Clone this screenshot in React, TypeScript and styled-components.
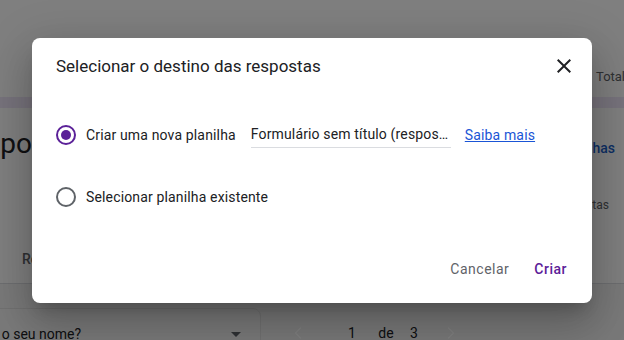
import React from "react";
import styled, { createGlobalStyle } from "styled-components";
import { ChevronLeft, ChevronRight } from "lucide-react";

const GlobalStyle = createGlobalStyle`
  html, body { margin: 0; padding: 0; }
  body {
    font-family: Roboto, "Noto Sans", Arial, sans-serif;
    background: #ffffff;
    -webkit-font-smoothing: antialiased;
  }
  * { box-sizing: border-box; }
`;

const Page = styled.div`
  position: relative;
  width: 624px;
  height: 340px;
  overflow: hidden;
  background: #ffffff;
  color: #202124;
`;

/* ---------- page behind the dialog ---------- */

const TopBar = styled.header`
  height: 97px;
  display: grid;
  grid-template-columns: 596px 1fr;
  align-items: end;
  padding-bottom: 10px;
`;

const TotalLabel = styled.span`
  grid-column: 2;
  font-size: 13px;
  line-height: 20px;
  color: #5f6368;
  white-space: nowrap;
`;

const ThemeBand = styled.div`
  height: 11px;
  background: #eee6f8;
`;

const HeadingRow = styled.div`
  height: 72px;
  display: flex;
  align-items: baseline;
  justify-content: space-between;
  padding: 18px 9px 0 0;
`;

const BigHeading = styled.h1`
  margin: 0 0 0 -61px;
  font-size: 28px;
  line-height: 36px;
  font-weight: 400;
  color: #202124;
  white-space: nowrap;
`;

const SheetsLink = styled.a`
  font-size: 14px;
  font-weight: 500;
  color: #1a5fc8;
  text-decoration: none;
  white-space: nowrap;
`;

const StatusRow = styled.div`
  height: 50px;
  display: flex;
  align-items: center;
  justify-content: flex-end;
  padding-right: 15px;
`;

const StatusText = styled.span`
  font-size: 12px;
  color: #5f6368;
  white-space: nowrap;
`;

const TabsRow = styled.nav`
  height: 54px;
  display: flex;
  align-items: flex-end;
  gap: 40px;
  padding: 0 0 14px 22px;
  border-bottom: 1px solid #dadce0;
`;

const Tab = styled.span`
  font-size: 14px;
  line-height: 20px;
  font-weight: 500;
  color: #5f6368;
`;

const LowerArea = styled.section`
  display: flex;
  align-items: flex-start;
  padding-top: 24px;
  height: 57px;
  background: #f2f2f2;
`;

const QuestionSelect = styled.div`
  margin-left: -58px;
  width: 319px;
  height: 56px;
  flex: none;
  display: flex;
  align-items: flex-start;
  justify-content: space-between;
  padding: 15px 19px 0 16px;
  border: 1px solid #e2e2e2;
  border-radius: 8px;
  background: #f5f5f5;
`;

const QuestionText = styled.span`
  font-size: 14px;
  line-height: 20px;
  color: #202124;
  white-space: nowrap;
`;

const DropArrow = styled.span`
  margin-top: 8px;
  width: 0;
  height: 0;
  border-left: 5px solid transparent;
  border-right: 5px solid transparent;
  border-top: 5px solid #5f6368;
`;

const Pager = styled.div`
  display: flex;
  align-items: center;
  height: 36px;
  margin: 7px 0 0 17px;
  font-size: 14px;
  color: #202124;
`;

const PagerNav = styled.span<{ $ml?: number }>`
  width: 40px;
  height: 36px;
  margin-left: ${(p) => p.$ml ?? 0}px;
  display: flex;
  align-items: center;
  justify-content: center;
  color: #ffffff;
`;

const PagerItem = styled.span<{ $w: number; $ml: number }>`
  width: ${(p) => p.$w}px;
  margin-left: ${(p) => p.$ml}px;
  text-align: center;
  line-height: 20px;
`;

/* ---------- dialog ---------- */

const Scrim = styled.div`
  position: absolute;
  inset: 0;
  background: rgba(0, 0, 0, 0.5);
  display: flex;
  align-items: center;
  justify-content: center;
`;

const Dialog = styled.div`
  width: 560px;
  background: #ffffff;
  border-radius: 8px;
  box-shadow: 0 11px 15px -7px rgba(0, 0, 0, 0.2),
    0 24px 38px 3px rgba(0, 0, 0, 0.14), 0 9px 46px 8px rgba(0, 0, 0, 0.12);
`;

const DialogHeader = styled.div`
  display: flex;
  align-items: center;
  justify-content: space-between;
  padding: 16px 16px 0 24px;
`;

const DialogTitle = styled.h2`
  margin: 0;
  font-size: 17px;
  line-height: 24px;
  font-weight: 400;
  color: #202124;
`;

const CloseButton = styled.button`
  width: 24px;
  height: 24px;
  padding: 0;
  border: none;
  background: transparent;
  color: #202124;
  display: flex;
  align-items: center;
  justify-content: center;
  cursor: pointer;
`;

const DialogBody = styled.div`
  display: flex;
  flex-direction: column;
  gap: 30px;
  padding: 41px 24px 38px 24px;
`;

const OptionRow = styled.label`
  height: 32px;
  display: flex;
  align-items: center;
`;

const Radio = styled.span<{ $checked?: boolean }>`
  position: relative;
  flex: none;
  width: 20px;
  height: 20px;
  border-radius: 50%;
  border: 2px solid ${(p) => (p.$checked ? "#5b2198" : "#5f6368")};
  margin-right: 10px;

  &::after {
    content: "";
    position: absolute;
    left: 3px;
    top: 3px;
    width: 10px;
    height: 10px;
    border-radius: 50%;
    background: #5b2198;
    display: ${(p) => (p.$checked ? "block" : "none")};
  }
`;

const OptionLabel = styled.span`
  font-size: 14px;
  line-height: 20px;
  color: #202124;
  letter-spacing: 0.15px;
  white-space: nowrap;
`;

const NameField = styled.span`
  width: 200px;
  margin-left: 15px;
  padding: 2px 0 3px 0;
  font-size: 14px;
  line-height: 20px;
  color: #202124;
  letter-spacing: 0.15px;
  border-bottom: 1px solid #dadce0;
  white-space: nowrap;
  overflow: hidden;
  text-overflow: ellipsis;
`;

const LearnMore = styled.a`
  margin-left: 14px;
  font-size: 14px;
  line-height: 20px;
  color: #1a55d6;
  text-decoration: underline;
  letter-spacing: 0.15px;
  white-space: nowrap;
`;

const DialogFooter = styled.div`
  display: flex;
  justify-content: flex-end;
  gap: 9px;
  padding: 0 17px 16px 24px;
`;

const TextButton = styled.button<{ $tone: "neutral" | "primary" }>`
  height: 36px;
  padding: 0 8px;
  border: none;
  background: transparent;
  font-family: Roboto, "Noto Sans", Arial, sans-serif;
  font-size: 14px;
  font-weight: ${(p) => (p.$tone === "primary" ? 500 : 400)};
  letter-spacing: 0.5px;
  color: ${(p) => (p.$tone === "primary" ? "#5b2198" : "#5f6368")};
  cursor: pointer;
`;

export default function App() {
  return (
    <>
      <GlobalStyle />
      <Page>
        <TopBar>
          <TotalLabel>Total de pontos: 0</TotalLabel>
        </TopBar>
        <ThemeBand />
        <HeadingRow>
          <BigHeading>3 respostas</BigHeading>
          <SheetsLink href="#">Vincular ao Planilhas</SheetsLink>
        </HeadingRow>
        <StatusRow>
          <StatusText>Aceitando respostas</StatusText>
        </StatusRow>
        <TabsRow>
          <Tab>Resumo</Tab>
          <Tab>Pergunta</Tab>
          <Tab>Individual</Tab>
        </TabsRow>
        <LowerArea>
          <QuestionSelect>
            <QuestionText>Qual é o seu nome?</QuestionText>
            <DropArrow />
          </QuestionSelect>
          <Pager>
            <PagerNav>
              <ChevronLeft size={20} strokeWidth={1.6} />
            </PagerNav>
            <PagerItem $w={30} $ml={19}>1</PagerItem>
            <PagerItem $w={18} $ml={10}>de</PagerItem>
            <PagerItem $w={10} $ml={14}>3</PagerItem>
            <PagerNav $ml={12}>
              <ChevronRight size={20} strokeWidth={1.6} />
            </PagerNav>
          </Pager>
        </LowerArea>

        <Scrim>
          <Dialog role="dialog" aria-label="Selecionar o destino das respostas">
            <DialogHeader>
              <DialogTitle>Selecionar o destino das respostas</DialogTitle>
              <CloseButton aria-label="Fechar">
                <svg width="24" height="24" viewBox="0 0 24 24" fill="currentColor">
                  <path d="M19 6.41L17.59 5 12 10.59 6.41 5 5 6.41 10.59 12 5 17.59 6.41 19 12 13.41 17.59 19 19 17.59 13.41 12z" />
                </svg>
              </CloseButton>
            </DialogHeader>
            <DialogBody>
              <OptionRow>
                <Radio $checked />
                <OptionLabel>Criar uma nova planilha</OptionLabel>
                <NameField>Formulário sem título (respostas)</NameField>
                <LearnMore href="#">Saiba mais</LearnMore>
              </OptionRow>
              <OptionRow>
                <Radio />
                <OptionLabel>Selecionar planilha existente</OptionLabel>
              </OptionRow>
            </DialogBody>
            <DialogFooter>
              <TextButton $tone="neutral">Cancelar</TextButton>
              <TextButton $tone="primary">Criar</TextButton>
            </DialogFooter>
          </Dialog>
        </Scrim>
      </Page>
    </>
  );
}
